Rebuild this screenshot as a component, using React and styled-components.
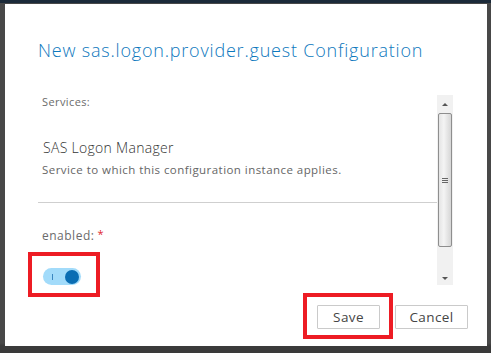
import React from 'react'
import styled, { createGlobalStyle } from 'styled-components'

const Global = createGlobalStyle`
  html, body { margin: 0; padding: 0; }
  body {
    width: 491px;
    height: 353px;
    overflow: hidden;
    background: #484848;
    font-family: "Open Sans", Lato, sans-serif;
  }
`

const Page = styled.div`
  width: 491px;
  height: 353px;
  border-top: 3px solid #1b2a39;
  box-sizing: border-box;
  padding: 1px 4px 0 5px;
  background: linear-gradient(#484848 0, #484848 340px, #3a3a3a 343px);
`

const Dialog = styled.div`
  width: 482px;
  height: 342px;
  background: #fff;
  box-sizing: border-box;
  padding: 34px 19px 0 33px;
  display: flex;
  flex-direction: column;
`

const Title = styled.h1`
  margin: 0;
  font-size: 18px;
  line-height: 24px;
  font-weight: 300;
  letter-spacing: 0.8px;
  color: #0d78bd;
`

const Body = styled.div`
  margin-top: 33px;
  display: flex;
  height: 190px;
`

const Content = styled.div`
  width: 399px;
`

const Label = styled.div`
  padding-left: 4px;
  font-size: 11px;
  line-height: 14px;
  letter-spacing: 0.4px;
  color: #6b6b6b;
`

const ServiceName = styled.div`
  padding-left: 5px;
  margin-top: 30px;
  font-size: 14px;
  line-height: 18px;
  font-weight: 300;
  letter-spacing: 0.3px;
  color: #333;
`

const Desc = styled.div`
  padding-left: 4px;
  margin-top: 6px;
  font-size: 11.5px;
  line-height: 14px;
  letter-spacing: 0.45px;
  color: #666;
`

const Divider = styled.hr`
  margin: 25px 0 0;
  border: 0;
  border-top: 1px solid #cfcfcf;
`

const FieldLabel = styled.div`
  padding-left: 4px;
  margin-top: 23px;
  font-size: 12px;
  line-height: 16px;
  letter-spacing: 0.5px;
  color: #6b6b6b;
`

const Required = styled.span`
  color: #e0262d;
  margin-left: 3px;
  font-size: 11px;
  vertical-align: 2px;
`

const Highlight = styled.div`
  border: 4px solid #ed1c24;
  box-sizing: border-box;
`

const ToggleBox = styled(Highlight)`
  width: 72px;
  height: 45px;
  margin: 8px 0 0 -10px;
  padding: 12px 0 0 11px;
`

const Toggle = styled.div`
  width: 38px;
  height: 17px;
  border-radius: 9px;
  background: #a2dbfa;
  display: flex;
  align-items: center;
  justify-content: space-between;
  padding: 0 2px 0 9px;
  box-sizing: border-box;
`

const OnMark = styled.span`
  width: 1px;
  height: 6px;
  background: #3a86c0;
`

const Knob = styled.span`
  width: 14px;
  height: 14px;
  border-radius: 50%;
  background: #0a6db3;
`

const Scrollbar = styled.div`
  width: 16px;
  background: #f1f1f1;
  display: flex;
  flex-direction: column;
  align-items: center;
`

const Arrow = styled.div`
  height: ${p => p.h}px;
  width: 16px;
  display: flex;
  align-items: ${p => (p.down ? 'flex-end' : 'center')};
  justify-content: center;
  padding-bottom: ${p => (p.down ? 5 : 0)}px;
  box-sizing: border-box;
  &::after {
    content: '';
    border-left: 3px solid transparent;
    border-right: 3px solid transparent;
    ${p => (p.down ? 'border-top: 3px solid #555;' : 'border-bottom: 3px solid #555;')}
  }
`

const Thumb = styled.div`
  width: 14px;
  height: 134px;
  box-sizing: border-box;
  border: 1px solid #8e8e8e;
  border-radius: 2px;
  background: linear-gradient(90deg, #e4e4e4, #f4f4f4 40%, #d6d6d6);
  display: flex;
  flex-direction: column;
  align-items: center;
  justify-content: center;
  gap: 1px;
`

const Grip = styled.span`
  width: 6px;
  height: 1px;
  background: #666;
`

const Spacer = styled.div`
  flex: 1;
`

const Footer = styled.div`
  margin-top: 8px;
  display: flex;
  justify-content: flex-end;
  align-items: flex-start;
`

const SaveBox = styled(Highlight)`
  width: 90px;
  height: 46px;
  padding: 8px 0 0 10px;
  margin-right: 2px;
`

const Button = styled.button`
  height: 24px;
  width: ${p => p.w}px;
  margin-top: ${p => p.mt || 0}px;
  background: #fff;
  border: 1px solid #cacaca;
  border-radius: 1px;
  font-family: "Open Sans", Lato, sans-serif;
  font-size: 13.5px;
  letter-spacing: 0.4px;
  color: #454545;
  padding: 0;
`

export default function App() {
  return (
    <>
      <Global />
      <Page>
        <Dialog>
          <Title>New sas.logon.provider.guest Configuration</Title>
          <Body>
            <Content>
              <Label>Services:</Label>
              <ServiceName>SAS Logon Manager</ServiceName>
              <Desc>Service to which this configuration instance applies.</Desc>
              <Divider />
              <FieldLabel>
                enabled:<Required>*</Required>
              </FieldLabel>
              <ToggleBox>
                <Toggle>
                  <OnMark />
                  <Knob />
                </Toggle>
              </ToggleBox>
            </Content>
            <Scrollbar>
              <Arrow h={18} />
              <Thumb>
                <Grip />
                <Grip />
                <Grip />
              </Thumb>
              <Spacer />
              <Arrow h={20} down />
            </Scrollbar>
          </Body>
          <Footer>
            <SaveBox>
              <Button w={63}>Save</Button>
            </SaveBox>
            <Button w={73} mt={12}>Cancel</Button>
          </Footer>
        </Dialog>
      </Page>
    </>
  )
}
